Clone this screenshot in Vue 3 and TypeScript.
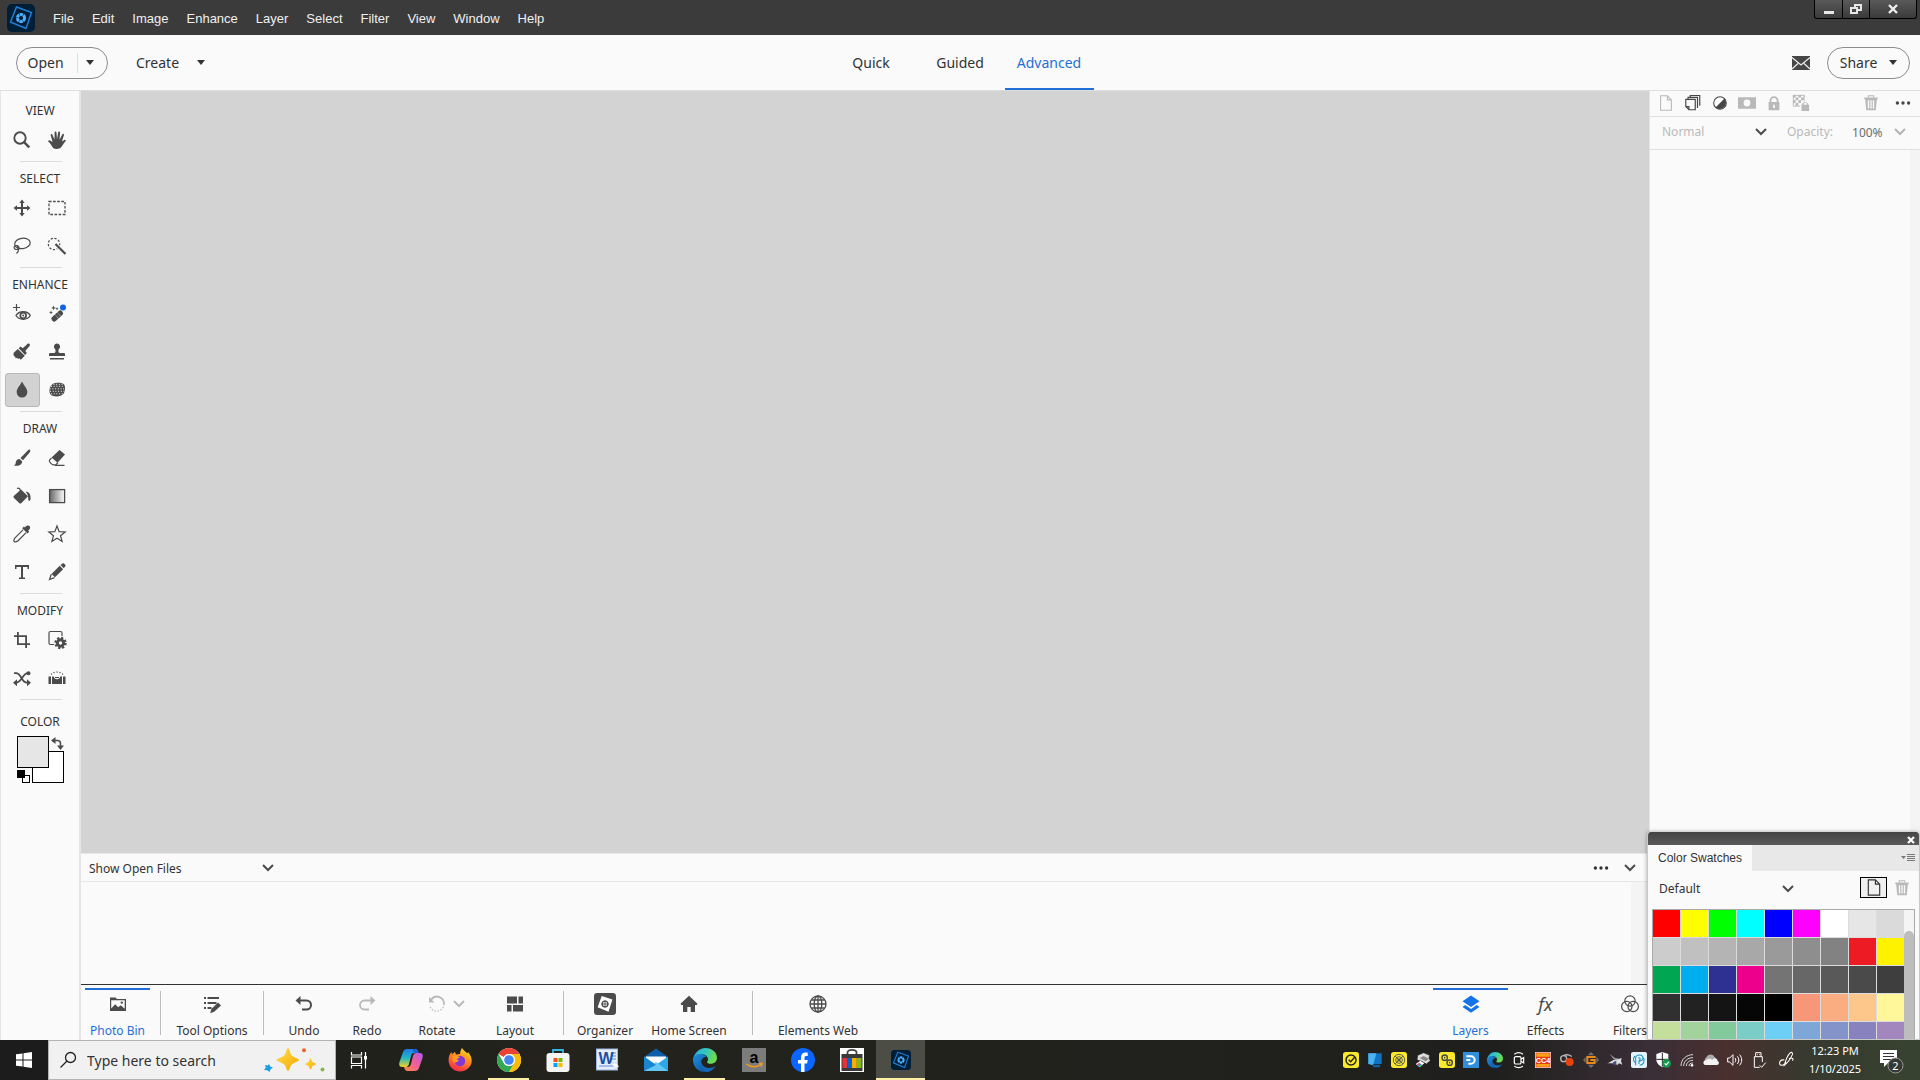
<script setup lang="ts">
import { ref } from 'vue'

interface Tool { icon: string; label: string }
interface ToolGroup { title: string; tools: Tool[] }
interface BarItem { icon: string; label: string; width: number; active?: boolean; dim?: boolean; dividerAfter?: number }
interface TaskApp { icon: string; label: string; state?: 'running' | 'active' }

const menus = ['File', 'Edit', 'Image', 'Enhance', 'Layer', 'Select', 'Filter', 'View', 'Window', 'Help']
const modes = ['Quick', 'Guided', 'Advanced']
const mode = ref('Advanced')
const activeTool = ref('Blur')

const groups: ToolGroup[] = [
  { title: 'VIEW', tools: [{ icon: 'zoom', label: 'Zoom' }, { icon: 'hand', label: 'Hand' }] },
  {
    title: 'SELECT',
    tools: [
      { icon: 'move', label: 'Move' }, { icon: 'marquee', label: 'Marquee' },
      { icon: 'lasso', label: 'Lasso' }, { icon: 'quick', label: 'Quick Selection' },
    ],
  },
  {
    title: 'ENHANCE',
    tools: [
      { icon: 'eye', label: 'Red Eye' }, { icon: 'heal', label: 'Spot Healing' },
      { icon: 'smart', label: 'Smart Brush' }, { icon: 'stamp', label: 'Clone Stamp' },
      { icon: 'drop', label: 'Blur' }, { icon: 'sponge', label: 'Sponge' },
    ],
  },
  {
    title: 'DRAW',
    tools: [
      { icon: 'brush', label: 'Brush' }, { icon: 'eraser', label: 'Eraser' },
      { icon: 'bucket', label: 'Paint Bucket' }, { icon: 'gradient', label: 'Gradient' },
      { icon: 'dropper', label: 'Color Picker' }, { icon: 'star', label: 'Custom Shape' },
      { icon: 'type', label: 'Type' }, { icon: 'pencil', label: 'Pencil' },
    ],
  },
  {
    title: 'MODIFY',
    tools: [
      { icon: 'crop', label: 'Crop' }, { icon: 'recompose', label: 'Recompose' },
      { icon: 'content', label: 'Content-Aware Move' }, { icon: 'straighten', label: 'Straighten' },
    ],
  },
]

const leftBar: BarItem[] = [
  { icon: 'photobin', label: 'Photo Bin', width: 65, active: true, dividerAfter: 10 },
  { icon: 'options', label: 'Tool Options', width: 102, dividerAfter: 0 },
  { icon: 'undo', label: 'Undo', width: 80 },
  { icon: 'redo', label: 'Redo', width: 46, dim: true },
  { icon: 'rotate', label: 'Rotate', width: 94, dim: true },
  { icon: 'layout', label: 'Layout', width: 62, dividerAfter: 17 },
  { icon: 'organizer', label: 'Organizer', width: 82 },
  { icon: 'home', label: 'Home Screen', width: 86, dividerAfter: 20 },
  { icon: 'web', label: 'Elements Web', width: 130 },
]
const rightBar: BarItem[] = [
  { icon: 'layers', label: 'Layers', width: 75, active: true },
  { icon: 'fx', label: 'Effects', width: 75 },
  { icon: 'filters', label: 'Filters', width: 94 },
]

const layerTools: Tool[] = [
  { icon: 'page', label: 'New layer' },
  { icon: 'group', label: 'New group' },
  { icon: 'adjust', label: 'Adjustment layer' },
  { icon: 'mask', label: 'Layer mask' },
  { icon: 'lock', label: 'Lock all' },
  { icon: 'lockalpha', label: 'Lock transparency' },
]

const swatches = (
  'ff0000 ffff00 00ff00 00ffff 0000ff ff00ff ffffff e6e6e6 dadada ' +
  'cccccc c0c0c0 b4b4b4 a8a8a8 9a9a9a 8e8e8e 828282 ed1c24 fff200 ' +
  '00a651 00aeef 2e3192 ec008c 747474 676767 595959 4a4a4a 3e3e3e ' +
  '303030 222222 141414 060606 000000 f7977a f9ad81 fdc68a fff799 ' +
  'c4df9b a2d39c 82ca9c 7bcdc8 6ecff6 7ea7d8 8493ca 8882be a187be'
).split(' ')

const apps: TaskApp[] = [
  { icon: 'copilot', label: 'Copilot' },
  { icon: 'firefox', label: 'Firefox' },
  { icon: 'chrome', label: 'Chrome', state: 'running' },
  { icon: 'store', label: 'Microsoft Store' },
  { icon: 'word', label: 'Word' },
  { icon: 'mail', label: 'Mail' },
  { icon: 'edge', label: 'Edge', state: 'running' },
  { icon: 'amazon', label: 'Amazon' },
  { icon: 'facebook', label: 'Facebook' },
  { icon: 'bag', label: 'Shopping' },
  { icon: 'elements', label: 'Elements', state: 'active' },
]
const tray = ['tCheck', 'tMonitor', 'tTarget', 'tPrinter', 'tGears', 'tD', 'edge', 'tCam', 'tCC', 'tRec', 'tG', 'tBird', 'tP', 'tShield', 'tWifi', 'tCloud', 'tSound', 'tUsb', 'tPen']

const edgeArt =
  '<defs><linearGradient id="eg1" x1="0" y1="0" x2="1" y2=".3"><stop offset="0" stop-color="#2aa8e8"/><stop offset=".55" stop-color="#35c6c0"/><stop offset="1" stop-color="#6ddc4a"/></linearGradient><linearGradient id="eg2" x1="0" y1="0" x2="1" y2="1"><stop offset="0" stop-color="#1e8fdc"/><stop offset="1" stop-color="#0c4f9c"/></linearGradient></defs>' +
  '<path fill="url(#eg1)" d="M0 12C1 5 6 0 12.500 0 19 0 24 4.500 24 9.800c0 3.800-2.800 6-6.200 6-2.400 0-3.800-.8-3.800-1.600 0-.7 1-1.200 1-3C15 8.300 12.400 6.500 9.500 6.500 5 6.500 1.500 9 0 12z"/>' +
  '<path fill="url(#eg2)" d="M0 12c0-3 3-6 7-6 3.500 0 6 1.500 7 3.200C11 8.500 8 11 8 15c0 4.800 3.600 8.300 7.500 8.700C7 25.500 0 20 0 12z"/>' +
  '<path fill="#1668b8" d="M8.500 13.500c0 4 3.600 6.500 7.700 6.500 2.600 0 4.800-.8 6.400-2-1.700 3.400-4.600 5.600-8 5.900C9.500 23 6.500 18 8.500 13.500z"/>'

const elementsArt =
  '<rect width="28" height="28" rx="5" fill="#001e36"/><path fill="none" stroke="#1f7fd6" stroke-width="1.500" d="M9.500 3 24.500 8.500 19 24.500 3.500 18z"/><circle cx="14" cy="14" r="3.600" fill="none" stroke="#4db1ff" stroke-width="3" stroke-dasharray="3.300 .5"/>'

const shapes: Record<string, string> = {
  zoom: '<circle cx="8" cy="8" r="5.700" fill="none" stroke="currentColor" stroke-width="1.900"/><path d="m12.300 12.300 5 5" stroke="currentColor" stroke-width="2.400"/>',
  hand: '<path fill="currentColor" d="M6.300 18.300C5 16.500 3.500 13.500 1.200 11.600c-.6-.8.7-1.800 1.800-1.200l2.600 1.700L3.700 5.200c-.3-1.200 1.400-1.700 1.800-.5l2 5L7.600 2.500c0-1.300 1.800-1.300 1.900 0l.5 6.800 1.200-7c.2-1.200 2-1 1.900.3l-.6 7.200 2.700-5.400c.6-1.100 2.100-.4 1.700.8l-2 6.200 2.400-1.500c1-.5 1.900.5 1.200 1.300-2.500 2.800-3.400 5.500-5.500 7.100-2 1-5 1-6.700 0z"/>',
  move: '<path fill="currentColor" d="M9 4h2v5h5v2h-5v5H9v-5H4V9h5zM10 1.500 12.700 5H7.300zM10 18.500 7.300 15h5.400zM1.500 10 5 7.300v5.400zM18.500 10 15 12.700V7.300z"/>',
  marquee: '<rect x="2" y="3.500" width="16" height="13" fill="none" stroke="currentColor" stroke-width="1.300" stroke-dasharray="2.600 1.500"/>',
  lasso: '<g fill="none" stroke="currentColor" stroke-width="1.200"><ellipse cx="10.500" cy="7.500" rx="7.800" ry="5.200" transform="rotate(-8 10 8)"/><ellipse cx="4.500" cy="11.500" rx="2.400" ry="2"/><path d="M5 9.500c2 2 2.500 5.500-.5 8"/></g>',
  quick: '<circle cx="7" cy="8" r="5.700" fill="none" stroke="currentColor" stroke-width="1.200" stroke-dasharray="2.200 1.600"/><path d="m8.500 8 10 10" stroke="#fafafa" stroke-width="4"/><path d="m8.500 8 10 10" stroke="currentColor" stroke-width="2.200"/>',
  eye: '<path d="M4.500 0v7M1 3.500h7" stroke="currentColor" stroke-width="1.200"/><path fill="none" stroke="currentColor" stroke-width="1.300" d="M4 11.500C7 6.500 15.500 6.500 18.300 11.500 15.500 16.500 7 16.500 4 11.500z"/><circle cx="11.200" cy="11.500" r="2.900" fill="none" stroke="currentColor" stroke-width="1.700"/><circle cx="11.200" cy="11.500" r="1" fill="currentColor"/>',
  heal: '<g fill="currentColor"><rect x="3.500" y="9.300" width="13.500" height="5.400" rx="2.300" transform="rotate(-42 10.200 12)"/><path d="m6.500 1.500.7 1.700 1.700.7-1.700.7-.7 1.700-.7-1.700-1.700-.7 1.700-.7zM4 6.500l.6 1.400 1.400.6-1.400.6-.6 1.400-.6-1.400L2 8.500l1.400-.6zM10 3l.5 1.200 1.200.5-1.200.5L10 6.400l-.5-1.200-1.200-.5 1.200-.5z"/></g><path d="m8 10.500 3.800 4.200M10.200 8.500l3.800 4.200" stroke="#fafafa" stroke-width=".8" stroke-dasharray="1 .8"/><circle cx="16" cy="3.500" r="3" fill="#0d66e5"/>',
  smart: '<path fill="currentColor" d="m1.500 11 4.300-4 7 6.800-4 4-1.600-1.600-1 .8-1.200-1.300-1.200.8-.8-1.900-1.300-.6zM6.700 6.200l2-1.700 2 1.800 4.700-4.400c1.600-1.300 3.300.5 2.200 2L13.300 9l1.500 2-1.600 1.900z"/>',
  stamp: '<path fill="currentColor" d="M10 1.500a3.200 3.200 0 0 1 2 5.600c-1 1-.8 3.200.5 4H17a1 1 0 0 1 1 1v2H2v-2a1 1 0 0 1 1-1h4.500c1.300-.8 1.500-3 .5-4A3.200 3.200 0 0 1 10 1.500zM3 16h14v1.500H3z"/>',
  drop: '<path fill="currentColor" d="M10 1.500c1.600 3.800 5.300 6.400 5.300 10.500A5.300 5.300 0 0 1 10 17.500 5.300 5.300 0 0 1 4.700 12C4.700 7.900 8.400 5.300 10 1.500z"/>',
  sponge: '<path fill="currentColor" d="M6 3.800C9 2.300 15.500 2.300 17.300 4.800c1.200 2.300 1 7-.8 9C14 16.800 7 17.200 4 15 1.800 13.300 1.500 6.500 6 3.800z"/><g fill="none" stroke="#f4f4f4" stroke-width="1" stroke-dasharray="1 1.700"><path d="M4 6.300h13M2.700 8.800h15M3 11.300h14.500M4 13.800h12M6.500 4.300h9"/></g>',
  brush: '<path fill="currentColor" d="M17.800 1.800c.9.600.4 1.900-.2 2.700L11 12.300 8.500 10 15.800 2.500c.6-.6 1.400-1.200 2-.7zM7.500 10.900l2.600 2.400c.3 3.200-3 5.200-8.300 4.200 2.200-.8 1.600-2 2.200-4 .5-1.700 1.900-2.700 3.500-2.600z"/>',
  eraser: '<path fill="currentColor" d="m12.500 2 5.500 4.500-7.500 8.300L4.500 9.500z"/><path fill="none" stroke="currentColor" stroke-width="1.200" d="m4.500 9.800-2 2.300c-1 1.400 2.600 4.900 4.400 4.700h2l2-2.300M8 17.400h9.500"/>',
  bucket: '<path fill="currentColor" d="m2 9.800 7-6.300 7 6.800-6.500 6.700c-.8.700-1.500.7-2.300 0l-5.200-5c-.8-.8-.7-1.500 0-2.200zM13.500 5.500c3 .3 5 2 5 5.500 0 1.600.3 3-1 4-1.400-.6-1.300-2-1.300-3.300 0-2-.6-3.600-2.700-6.200z"/><path fill="none" stroke="currentColor" stroke-width="1.300" d="M5 2.500c2-1 3 .5 3.500 2L10 9"/>',
  gradient: '<defs><linearGradient id="gr"><stop offset="0" stop-color="#666"/><stop offset="1" stop-color="#fff"/></linearGradient></defs><rect x="2.600" y="3.600" width="15" height="13" fill="url(#gr)" stroke="#4b4b4b" stroke-width="1.300"/>',
  dropper: '<path fill="currentColor" d="M13 3.500c1.300-2 3.300-2.500 4.500-1.400 1.200 1.200.7 3.200-1.300 4.500l1 1.200-1.700 1.700-5.300-5.300 1.700-1.700z"/><path fill="none" stroke="currentColor" stroke-width="1.200" d="m11 5.800-8 8c-.7.800-.5 1.500-1.200 2.500-.4.800 1 2 1.800 1.600 1-.7 1.700-.5 2.500-1.200l8-8"/>',
  star: '<path fill="none" stroke="currentColor" stroke-width="1.200" d="m10 2 2.200 5.600 6 .3-4.700 3.800 1.600 5.800-5.100-3.300-5.100 3.300 1.600-5.800L1.800 7.900l6-.3z"/>',
  type: '<path fill="currentColor" d="M3 3h14v4h-1.500V5H11v10.500h2V17H7v-1.500h2V5H4.500v2H3z"/>',
  pencil: '<path fill="currentColor" d="m13.500 3 2-1.500c.5-.3 1-.3 1.500.1l1.200 1.200c.5.500.5 1 .1 1.500L16.800 6.300zM12.700 3.800l3.400 3.400L8 15.300l-3.500-3.400z"/><path fill="none" stroke="currentColor" stroke-width="1.200" d="m4.300 12.300-1.800 5.200 5-1.900"/>',
  crop: '<path fill="currentColor" d="M5 2h1.800v3.200H15v8h3V15h-3v3h-1.800v-3H5V7H2V5.200h3zm1.800 5v6.200h6.400V7z"/>',
  recompose: '<path fill="none" stroke="currentColor" stroke-width="1.200" d="M7 14.500H3.500a1.500 1.500 0 0 1-1.500-1.500V3A1.500 1.500 0 0 1 3.500 1.500h10A1.500 1.500 0 0 1 15 3v3"/><circle cx="13.500" cy="13" r="3.200" fill="none" stroke="currentColor" stroke-width="3"/><circle cx="13.500" cy="13" r="5.200" fill="none" stroke="currentColor" stroke-width="2" stroke-dasharray="2.200 1.880"/>',
  content: '<path fill="none" stroke="currentColor" stroke-width="1.800" d="M2 5.200h2c5.500 0 5.500 9.500 11 9.500h.5M16 5.200c-5.500 0-6.500 9.500-12 9.500"/><path fill="currentColor" d="m1 14.700 4-3.500v7zM19 14.700l-4-3.500v7zM18.500 5.200a2 2 0 1 1-4 0 2 2 0 0 1 4 0z"/>',
  straighten: '<path fill="currentColor" d="M1.500 8.500H4V16H1.500zM16 8.500h2.500V16H16zM5 8.500h1.800c.3 2 1.500 2.700 3.200 2.700s2.900-.7 3.200-2.700H15V16H5zM8 9h4v1H8z"/><g fill="currentColor"><circle cx="4.500" cy="6" r=".7"/><circle cx="7" cy="4.500" r=".7"/><circle cx="10" cy="4" r=".7"/><circle cx="13" cy="4.500" r=".7"/><circle cx="15.500" cy="6" r=".7"/></g>',
  photobin: '<path fill="currentColor" d="M2 3.500h5.500l1.500 1.500H18v12H2zM3.200 7v7.500l4-4.200 3 3 2.500-2 4 3.500V6.300H3.200z" fill-rule="evenodd"/><circle cx="13.800" cy="8.600" r="1.200" fill="currentColor"/>',
  options: '<path stroke="currentColor" stroke-width="1.800" d="M2 4h2M5.500 4H17M2 9h2M5.500 9h9M2 14h2M5.500 14h4"/><path fill="currentColor" d="m16 8.500 3 3-6.800 6.300-4 1.400 1.200-4.200z"/>',
  undo: '<path fill="none" stroke="currentColor" stroke-width="2" d="M4 6.500h8.500a4.500 4.500 0 0 1 0 9H8"/><path fill="currentColor" d="M6.500 2v9L1.500 6.500z"/>',
  redo: '<path fill="none" stroke="currentColor" stroke-width="1.800" d="M16 6.500H7.500a4.500 4.500 0 0 0 0 9H12"/><path fill="currentColor" d="M13.500 2v9l5-4.500z"/>',
  rotate: '<path fill="none" stroke="currentColor" stroke-width="1.800" d="M4 6C8-.5 17 3 17 10"/><path fill="none" stroke="currentColor" stroke-width="1.200" stroke-dasharray="1.500 1.500" d="M17 10c0 8-12 10-14 2"/><path fill="currentColor" d="M2 3v5.500h5.500z"/>',
  layout: '<path fill="currentColor" d="M2 2.500h10v7H2zM13.500 2.500H18v7h-4.500zM2 11h4.500v6.500H2zM8 11h10v6.500H8z"/>',
  organizer: '<rect width="20" height="20" rx="3" fill="currentColor"/><path fill="#fff" d="m7 2.700 9.800 3.300-3.600 11L3.300 13z"/><circle cx="10" cy="10" r="2.600" fill="none" stroke="currentColor" stroke-width="1.200"/><path d="M10 6.500v7M6.500 10h7" stroke="currentColor" stroke-width=".8"/>',
  home: '<path fill="currentColor" d="m10 1.800 8.500 8-.8 1.200H16v7h-4.300v-5H8.300v5H4v-7H2.300l-.8-1.200z"/>',
  web: '<g fill="none" stroke="currentColor" stroke-width="1.300"><circle cx="10" cy="10" r="8"/><ellipse cx="10" cy="10" rx="3.800" ry="8"/><path d="M10 2v16M2 10h16M3.300 6h13.400M3.300 14h13.400"/></g>',
  layers: '<path fill="currentColor" d="m10 1.500 8.500 5.800L10 13 1.500 7.300zM4.300 11 10 15l5.700-4 2.800 1.900L10 18.700l-8.500-5.800z"/>',
  filters: '<g fill="none" stroke="currentColor" stroke-width="1.200"><circle cx="10" cy="7" r="5.200"/><circle cx="6.800" cy="12.500" r="5.200"/><circle cx="13.200" cy="12.500" r="5.200"/></g>',
  page: '<path fill="none" stroke="currentColor" stroke-width="1.200" d="M4 2h7.500L16 6.500V18H4zM11.500 2v4.500H16"/>',
  group: '<path fill="none" stroke="currentColor" stroke-width="1.300" d="M2 6h10.500v11.500H5.500L2 14zM2 14h3.500v3.500M4.500 6V3.700h10.500V15.500M7 3.500V1.700h10.500V13"/>',
  adjust: '<circle cx="10" cy="10" r="7" fill="#fff" stroke="currentColor" stroke-width="1.200"/><path fill="currentColor" d="M15 5a7.100 7.100 0 0 1-10 10z"/>',
  mask: '<path fill="currentColor" fill-rule="evenodd" d="M0 3.500h20v13H0zM10 6.200a3.800 3.800 0 1 0 0 7.600 3.800 3.800 0 0 0 0-7.600z"/>',
  lock: '<path fill="currentColor" fill-rule="evenodd" d="M4 9h1V7.500a5 5 0 0 1 10 0V9h1v9H4zm3 0h6V7.500a3 3 0 0 0-6 0zm2 3v3.500h2V12z"/>',
  lockalpha: '<path fill="currentColor" d="M1 1h3v3H1zM7 1h3v3H7zM4 4h3v3H4zM10 4h3v3h-3zM1 7h3v3H1zM7 7h3v3H7zM4 10h3v3H4zM13 1h1v3h-1z"/><path fill="none" stroke="currentColor" d="M1.500 1.500h12V8M1.500 1.500v12H9"/><path fill="currentColor" fill-rule="evenodd" d="M11 12v-1a4 4 0 0 1 7 0v1h1v7h-8.500v-7zm2 0h3.500v-1c0-1.800-3.500-1.800-3.500 0z"/>',
  trash: '<path fill="none" stroke="currentColor" stroke-width="1.200" d="M7 4V2h6v2"/><path fill="currentColor" fill-rule="evenodd" d="M2.500 4h15v1.800h-1L15.300 18H4.700L3.500 5.800h-1zM6.500 7v9H8V7zM9.300 7v9h1.400V7zM12 7v9h1.500V7z"/>',
  dots: '<g fill="currentColor"><circle cx="3" cy="10" r="2.100"/><circle cx="10" cy="10" r="2.100"/><circle cx="17" cy="10" r="2.100"/></g>',
  envelope: '<path fill="#464646" d="M0 2h18v14H0z"/><path fill="none" stroke="#eee" stroke-width="1.200" d="m0 3.500 9 7.500 9-7.500M0 15l6-5.500M18 15l-6-5.500"/>',
  swap: '<path fill="none" stroke="currentColor" stroke-width="1.500" d="M4 3.500h2.500c2 0 3 1.200 3 3V9"/><path fill="currentColor" d="M0 3.500 4.500 0v7zM9.500 13 6 8.500h7z"/>',
  windows: '<path fill="#fff" d="M0 2.300 6.500 1.400v6.100H0zM7.500 1.200 16 0v7.500H7.500zM0 8.500h6.500v6.100L0 13.700zM7.500 8.500H16V16l-8.500-1.200z"/>',
  search: '<circle cx="10.500" cy="5.500" r="5" fill="none" stroke="#222" stroke-width="1.300"/><path d="M7 9 .5 15.500" stroke="#222" stroke-width="1.300"/>',
  sparkle: '<defs><linearGradient id="sp" x1="0" y1="0" x2="1" y2="1"><stop offset="0" stop-color="#ffe04a"/><stop offset="1" stop-color="#f5a800"/></linearGradient></defs><path fill="url(#sp)" d="M24 0c1.500 0 2 5.500 3.800 7.500C29.800 9.500 35 10.500 35 12s-5.200 2.500-7.200 4.500S25.500 23 24 23s-1.800-4.500-3.800-6.500S12.500 13.500 12.500 12s5.700-2.500 7.700-4.500S22.500 0 24 0z"/><path fill="url(#sp)" d="M46.500 10c.8 0 1 3 2 4s3.500 1.200 3.500 2-2.500 1-3.500 2-1.200 3.500-2 3.500-1-2.500-2-3.500-3.500-1.200-3.500-2 2.500-1 3.500-2 1.200-4 2-4z"/><path fill="#1c9fe0" d="m5 16 1.500 2.700 2.500.8-2.400 1.700L5.500 24l-2.300-1.800L0 22l1.800-2.500L1 17l2.800.5z"/><circle cx="40" cy="2.200" r="2" fill="#e8642c"/><circle cx="58.500" cy="21.500" r="2" fill="#7dbb4c"/>',
  taskview: '<path fill="none" stroke="#fff" stroke-width="1.200" d="M1.500 0v3h10V0M1.500 5h10v6.500h-10zM1.500 16.500v-3h10v3M15.500 0v16.500"/><path fill="#fff" d="M14 4h3v3.500h-3z"/>',
  copilot: '<defs><linearGradient id="cp1" x1="0" y1="0" x2="0" y2="1"><stop offset="0" stop-color="#1f7be8"/><stop offset=".5" stop-color="#22b7c4"/><stop offset="1" stop-color="#f2d21e"/></linearGradient><linearGradient id="cp2" x1="1" y1="0" x2="0" y2="1"><stop offset="0" stop-color="#b25bea"/><stop offset=".5" stop-color="#ef5f9a"/><stop offset="1" stop-color="#ff8a3c"/></linearGradient></defs><path fill="url(#cp1)" d="M8 1h8c2 0 3 2 3.500 4L15 5c-2 0-2.500 1-3 3l-2 8c-.5 2-1.500 3-3.500 3H3c-3 0-3-3-2.500-5L4 4c.7-2 2-3 4-3z"/><path fill="url(#cp2)" d="M16 23H8.500c-2 0-3-2-3.500-4h3.500c2 0 3-1 3.500-3l2-8c.5-2 1.500-3 3.500-3H21c3 0 3.200 3 2.500 5L20 20c-.7 2-2 3-4 3z"/><path fill="#1d5fd6" d="M13 1h4c1.500.5 2 2 2.500 4h-3c-1.500 0-2-2-3.500-4z"/>',
  firefox: '<defs><linearGradient id="ff" x1=".8" y1="0" x2=".3" y2="1"><stop offset="0" stop-color="#ffe226"/><stop offset=".45" stop-color="#ff8a1e"/><stop offset="1" stop-color="#f5264f"/></linearGradient></defs><path fill="url(#ff)" d="M14 0c1 2 4 4 5.500 5.500L20 4c2.500 3 4 6 3.700 9.500C23.300 19 18 23.500 12 23.500S1 19 .6 13C.3 9 1.500 6 3.500 4l.5 2.500C5 5 6 4.500 7 4l1 2.500L12 6c0-2 1-4.500 2-6z"/><circle cx="12" cy="13" r="5.200" fill="#8437d6"/><path fill="#ff9a24" d="M5 8c3-1 5 0 7 1.500-1 .5-3 .5-3.500 2 1 0 2.500.5 2 1.500-1 1.500-3.500 1-4.500 2C4 13 4 10 5 8z"/>',
  chrome: '<circle cx="12" cy="12" r="12" fill="#fff"/><path fill="#ea4335" d="M1.600 6A12 12 0 0 1 22.400 6H12a6 6 0 0 0-5.200 3z"/><path fill="#fbbc05" d="M22.400 6A12 12 0 0 1 12 24l5.200-9A6 6 0 0 0 12 6z"/><path fill="#34a853" d="M12 24A12 12 0 0 1 1.600 6l5.200 9a6 6 0 0 0 10.400 0z"/><circle cx="12" cy="12" r="6" fill="#fff"/><circle cx="12" cy="12" r="4.800" fill="#4285f4"/>',
  store: '<path fill="none" stroke="#35b5e6" stroke-width="1.800" d="M7 6V2h10v4"/><rect x=".5" y="5" width="23" height="19" rx="3" fill="#f4f4f4"/><path fill="#f25022" d="M7.500 10h4v4h-4z"/><path fill="#7fba00" d="M12.500 10h4v4h-4z"/><path fill="#00a4ef" d="M7.500 15h4v4h-4z"/><path fill="#ffb900" d="M12.500 15h4v4h-4z"/>',
  word: '<rect x="1.500" y="1" width="21" height="21" fill="#e6eefa" stroke="#9db8e0"/><path stroke="#5b8fd6" d="M16 5h5M16 8h5M16 11h5M4 18h14"/><text x="11" y="15.500" text-anchor="middle" font-family="Liberation Sans, Arial, sans-serif" font-weight="700" font-size="16" fill="#1b4fa3">W</text><path fill="#fff" stroke="#9db8e0" stroke-width=".6" d="M15 15h7l1.500 4-3 1z"/>',
  mail: '<path fill="#0c5ea8" d="m0 9 12-8.500L24 9v3H0z"/><path fill="#f7fbff" d="M2 8.500h20V16H2z"/><path fill="#2ea6e6" d="M0 8.500 12 17l12-8.500V23H0z"/><path fill="#63c8f5" d="M0 23 12 14l12 9z"/><path fill="#1b86d0" d="M0 8.500 12 17 0 23z"/>',
  edge: edgeArt,
  amazon: '<path fill="#7c7c7c" d="M0 0h24v24H0z"/><text x="12" y="15" text-anchor="middle" font-family="Liberation Sans, Arial, sans-serif" font-weight="700" font-size="16" fill="#000">a</text><path fill="none" stroke="#f79a1c" stroke-width="1.500" d="M4.500 16c4 3.500 10.500 3.500 14.500.5M17 15.500l3 0-1 3"/>',
  facebook: '<circle cx="12" cy="12" r="12" fill="#0b66ff"/><path fill="#fff" d="M10 24v-8.500H7V12h3V9.500C10 6.300 11.800 4.500 14.700 4.500c1 0 2 .2 2 .2v3.200h-1.500c-1.500 0-1.700.8-1.700 1.800V12h3.200l-.6 3.500h-2.600V24z"/>',
  bag: '<path fill="#fff" d="M0 0h24v24H0z"/><path fill="none" stroke="#444" stroke-width="1.800" d="M7.500 8V4.500c0-3.500 9-3.500 9 0V8"/><path fill="#3a3a3a" d="M1.500 6h21v17h-21z"/><path fill="#e53238" d="M2.500 10h4.800v10H2.500z"/><path fill="#0064d2" d="M7.300 10H12v10H7.300z"/><path fill="#f5af02" d="M12 10h4.800v10H12z"/><path fill="#86b817" d="M16.800 10h4.700v10h-4.700z"/>',
  elements: elementsArt,
  tCheck: '<rect width="24" height="24" rx="4" fill="#fbe92b"/><circle cx="12" cy="12" r="7.500" fill="none" stroke="#222" stroke-width="2.200"/><path fill="none" stroke="#222" stroke-width="2.200" d="m8.500 11.500 3 3 6-6.500"/>',
  tMonitor: '<path fill="#1272c4" d="M2 2h20v16H2z"/><path fill="#4bb3f0" d="m2 2 12 0L9 20 2 18z"/><path fill="#0d5fa8" d="m8 19 12 0-1 4h-9z"/>',
  tTarget: '<rect width="24" height="24" rx="4" fill="#fbe92b"/><g fill="none" stroke="#555" stroke-width="1.400"><circle cx="12" cy="12" r="8.500"/><circle cx="12" cy="12" r="5"/><circle cx="12" cy="12" r="1.800"/><path d="m6 6 12 12M18 6 6 18"/></g>',
  tPrinter: '<path fill="#ddd" stroke="#222" d="m4 5 9-4 9 4-1 4 2 4-6 5-7-4-7-2z"/><path fill="#888" d="m7 9 9 5 5-4-8-4z"/><path fill="#fff" d="m1 18 7-5 6 4-7 6z"/><path stroke="#e33" stroke-width="2" d="m3 20 4-3"/><path stroke="#2a6be0" stroke-width="2" d="m5 21 4-3"/><path stroke="#2ab040" stroke-width="2" d="m7 22 4-3"/>',
  tGears: '<rect width="24" height="24" rx="4" fill="#fbe92b"/><g fill="none" stroke="#444" stroke-width="2"><circle cx="8.500" cy="8.500" r="4"/><circle cx="16" cy="16" r="4"/></g><circle cx="8.500" cy="8.500" r="1.200" fill="#444"/><circle cx="16" cy="16" r="1.200" fill="#444"/>',
  tD: '<path fill="#2f8fdd" d="M0 0h24v24H0z"/><path fill="none" stroke="#fff" stroke-width="3" d="M5 6.500h7a5.500 5.500 0 0 1 0 11H8M5 12h6"/>',
  tCam: '<g fill="none" stroke="#fff" stroke-width="1.800"><rect x="5" y="7" width="10" height="11" rx="2"/><path d="m15 11 4-2.500v8L15 14M5 3.500c4-3 9-3 13 0M5 21.500c4 2.500 9 2.500 13 0"/></g>',
  tCC: '<path fill="#e23a12" d="M0 0h24v24H0z"/><path fill="#f7a11a" d="M2 2h20v5H2zM2 18h20v4H2z"/><text x="12" y="17" text-anchor="middle" font-family="Liberation Sans, Arial, sans-serif" font-weight="700" font-size="11" fill="#fff">CC4</text><rect x=".5" y=".5" width="23" height="23" fill="none" stroke="#fde"/>',
  tRec: '<g fill="none" stroke="#bbb" stroke-width="2"><circle cx="7" cy="10" r="4.500"/><path d="M7 5.500C11 3 17 4 19 7"/></g><circle cx="16" cy="15" r="6" fill="#e8430f"/>',
  tG: '<path fill="#6d6d6d" d="m12 0 5 5H7zM12 24l-5-5h10zM0 12l4-5v10zM24 12l-4 5V7z"/><path fill="none" stroke="#e8891c" stroke-width="3" d="M19 7.500H6.500v9h11V12H11"/>',
  tBird: '<path fill="#999" d="m4 3 8 6 7 1-3 3-6-2z"/><path fill="#ddd" d="M0 17c5-1 7-5 11-5l6-1 5-2-1 5 2 5-5-2-3 3-2-3z"/><path fill="#44508c" d="m9 15 5-2v6l-4 1z"/>',
  tP: '<rect width="24" height="24" rx="3" fill="#e4f3fa"/><g fill="none" stroke="#2090c4" stroke-width="1.600"><path d="M7 20V9c0-6 11-6 11 0 0 4-4 5-6 4M6 6c-3 3-3 7 0 10M13 20c6-1 8-6 6-11M11 9c3-1 4 2 1 4v5"/></g>',
  tShield: '<path fill="#fff" d="m11 0 9 3v8c0 6-4 9-9 12-5-3-9-6-9-12V3z"/><path stroke="#222" stroke-width="1.500" d="M11 1v21M2 11h18"/><circle cx="17.500" cy="17" r="6.500" fill="#149a4a"/><path fill="none" stroke="#fff" stroke-width="1.800" d="m14.500 17 2.300 2.300 4-4.500"/>',
  tWifi: '<g fill="none" stroke="#ddd" stroke-width="1.500"><path d="M3 21C3 11 11 4 21 4M7 21C7 14 13 8.500 21 8.500M11 21c0-5 4.500-8.500 10-8.500M15 21c0-3 2-4.500 6-4.500"/></g><circle cx="19.500" cy="20" r="2" fill="#fff"/>',
  tCloud: '<path fill="#aaa" d="M6 17A5 5 0 0 1 5 8c2-5 9-6 12-1l2 2-9 9z"/><path fill="#f2f2f2" d="M3 19.500c-4-2-2.500-7.500 1.500-7.200C8 9 12 10 14 12c2-4.500 8-3 8 1.500 3 1.500 2 6-1 6z"/>',
  tSound: '<g fill="none" stroke="#fff" stroke-width="1.500"><path d="M1 9h3l5-5v16l-5-5H1zM12 9c1.500 2 1.500 4.500 0 6.500M15.500 6.500c3 3.500 3 8 0 11.500M19 4c4 5 4 11 0 16"/></g>',
  tUsb: '<g fill="none" stroke="#fff" stroke-width="1.500"><path d="M7 7V1h8v6M9.500 4h1M12 4h1M5 7h12v8M5 7v16h8M13 20l3 3 6-7"/></g>',
  tPen: '<g fill="none" stroke="#fff" stroke-width="1.600"><path d="M8 20c2-8 6-16 9-19 2-1 4 0 3 3-2 5-7 12-12 16zM8 12c-5-1-8 2-7 6 2 4 8 1 10-2M15 10c4-2 8 0 5 3"/></g>',
  notice: '<path fill="#fff" d="M0 0h17v13H8l-4 4v-4H0z"/><path stroke="#333" stroke-width="1.200" d="M3 3.500h11M3 6.500h11M3 9.500h8"/><circle cx="15.500" cy="15.500" r="7.500" fill="#333a33" stroke="#999"/><text x="15.500" y="19.500" text-anchor="middle" font-family="Noto Sans, sans-serif" font-size="11" fill="#fff">2</text>',
}
</script>

<template>
  <div class="screen">
    <header class="menubar">
      <svg class="logo" viewBox="0 0 28 28" v-html="shapes.elements"></svg>
      <nav class="menus">
        <button v-for="m in menus" :key="m" type="button">{{ m }}</button>
      </nav>
      <div class="winbtns">
        <button type="button" aria-label="Minimize"><svg width="10" height="12" viewBox="0 0 10 12"><path fill="#e6e6e6" d="M0 8h10v3H0z" /></svg></button>
        <button type="button" aria-label="Restore"><svg width="12" height="12" viewBox="0 0 12 12"><path fill="none" stroke="#e6e6e6" stroke-width="2" d="M5 4V2h6v5H8M1 5h6v5H1z" /></svg></button>
        <button type="button" class="wide" aria-label="Close"><svg width="10" height="10" viewBox="0 0 10 10"><path stroke="#eee" stroke-width="2.400" d="m1 1 8 8M9 1 1 9" /></svg></button>
      </div>
    </header>

    <div class="topbar">
      <div class="top-left">
        <div class="pill">
          <button type="button" class="pill-main">Open</button>
          <button type="button" class="pill-arrow" aria-label="Open menu"><i class="tri"></i></button>
        </div>
        <button type="button" class="create">Create<i class="tri"></i></button>
      </div>
      <nav class="modes">
        <button v-for="m in modes" :key="m" type="button" :class="{ on: mode === m }" @click="mode = m">{{ m }}</button>
      </nav>
      <div class="top-right">
        <button type="button" aria-label="Messages"><svg width="18" height="18" viewBox="0 0 18 18" v-html="shapes.envelope"></svg></button>
        <button type="button" class="share">Share<i class="tri"></i></button>
      </div>
    </div>

    <div class="workspace">
      <aside class="toolbox">
        <section v-for="g in groups" :key="g.title">
          <h2>{{ g.title }}</h2>
          <div class="tools">
            <button v-for="t in g.tools" :key="t.label" type="button" :aria-label="t.label" :class="{ on: activeTool === t.label }" @click="activeTool = t.label">
              <svg width="20" height="20" viewBox="0 0 20 20" v-html="shapes[t.icon]"></svg>
            </button>
          </div>
        </section>
        <section class="color">
          <h2>COLOR</h2>
          <div class="chips">
            <span class="chip back"></span>
            <span class="chip fore"></span>
            <svg class="swap" viewBox="0 0 13 13" v-html="shapes.swap"></svg>
            <span class="mini back"></span>
            <span class="mini fore"></span>
          </div>
        </section>
      </aside>

      <div class="main">
        <div class="upper">
          <div class="center">
            <main class="canvas"></main>
            <div class="bin-head">
              <label class="picker files">
                <select aria-label="Photo bin source"><option>Show Open Files</option></select>
                <svg class="chev" viewBox="0 0 12 8"><path d="m1 1 5 5 5-5" /></svg>
              </label>
              <div class="bin-actions">
                <button type="button" aria-label="More"><svg width="16" height="16" viewBox="0 0 20 20" v-html="shapes.dots"></svg></button>
                <button type="button" aria-label="Collapse"><svg class="chev" viewBox="0 0 12 8"><path d="m1 1 5 5 5-5" /></svg></button>
              </div>
            </div>
            <div class="bin-body"></div>
          </div>
          <aside class="layers">
            <div class="layer-tools">
              <button v-for="t in layerTools" :key="t.icon" type="button" :aria-label="t.label" :class="{ live: t.icon === 'group' || t.icon === 'adjust' }">
                <svg width="18" height="18" viewBox="0 0 20 20" v-html="shapes[t.icon]"></svg>
              </button>
              <button type="button" class="push" aria-label="Delete layer"><svg width="18" height="18" viewBox="0 0 20 20" v-html="shapes.trash"></svg></button>
              <button type="button" class="live more" aria-label="More"><svg width="16" height="16" viewBox="0 0 20 20" v-html="shapes.dots"></svg></button>
            </div>
            <div class="blend">
              <label class="picker normal">
                <select aria-label="Blend mode"><option>Normal</option></select>
                <svg class="chev" viewBox="0 0 12 8"><path d="m1 1 5 5 5-5" /></svg>
              </label>
              <label class="opacity" for="opacity">Opacity:</label>
              <input id="opacity" value="100%" />
              <svg class="chev pale" viewBox="0 0 12 8"><path d="m1 1 5 5 5-5" /></svg>
            </div>
            <div class="layer-list"></div>
          </aside>
        </div>

        <footer class="bottombar">
          <template v-for="b in leftBar" :key="b.label">
            <button type="button" class="bar-item" :class="{ on: b.active }" :style="{ width: b.width + 'px' }">
              <span class="bar-icon" :class="{ dim: b.dim, boxed: b.icon === 'organizer' }">
                <svg viewBox="0 0 20 20" v-html="shapes[b.icon]"></svg>
                <svg v-if="b.icon === 'rotate'" class="chev" viewBox="0 0 12 8"><path d="m1 1 5 5 5-5" /></svg>
              </span>
              <span>{{ b.label }}</span>
            </button>
            <i v-if="b.dividerAfter !== undefined" class="divider" :style="{ marginLeft: b.dividerAfter + 'px' }"></i>
          </template>
          <div class="bar-right">
            <button v-for="b in rightBar" :key="b.label" type="button" class="bar-item" :class="{ on: b.active }" :style="{ width: b.width + 'px' }">
              <span class="bar-icon">
                <em v-if="b.icon === 'fx'" class="fx">fx</em>
                <svg v-else viewBox="0 0 20 20" v-html="shapes[b.icon]"></svg>
              </span>
              <span>{{ b.label }}</span>
            </button>
          </div>
        </footer>
      </div>

      <div class="swatch-window">
        <div class="sw-title">
          <button type="button" aria-label="Close"><svg width="8" height="8" viewBox="0 0 8 8"><path stroke="#fff" stroke-width="2.200" d="m1 1 6 6M7 1 1 7" /></svg></button>
        </div>
        <div class="sw-tabs">
          <button type="button" class="sw-tab">Color Swatches</button>
          <button type="button" class="sw-menu" aria-label="Panel menu">
            <svg width="14" height="8" viewBox="0 0 14 8"><path fill="#777" d="M0 2h5L2.500 5z" /><path stroke="#777" d="M6 .5h8M6 2.500h8M6 4.500h8M6 6.500h8" /></svg>
          </button>
        </div>
        <div class="sw-tools">
          <label class="picker default">
            <select aria-label="Swatch set"><option>Default</option></select>
            <svg class="chev" viewBox="0 0 12 8"><path d="m1 1 5 5 5-5" /></svg>
          </label>
          <button type="button" class="sw-new" aria-label="New swatch"><svg width="20" height="19" viewBox="0 0 20 20" v-html="shapes.page"></svg></button>
          <button type="button" class="sw-trash" aria-label="Delete swatch"><svg width="18" height="18" viewBox="0 0 20 20" v-html="shapes.trash"></svg></button>
        </div>
        <div class="sw-box">
          <div class="sw-grid">
            <span v-for="(c, i) in swatches" :key="i" :style="{ background: '#' + c }"></span>
          </div>
          <div class="sw-scroll"><i></i></div>
        </div>
      </div>
    </div>

    <div class="taskbar">
      <button type="button" class="start" aria-label="Start"><svg width="16" height="16" viewBox="0 0 16 16" v-html="shapes.windows"></svg></button>
      <div class="search">
        <svg width="16" height="16" viewBox="0 0 16 16" v-html="shapes.search"></svg>
        <input type="text" placeholder="Type here to search" aria-label="Search" />
        <svg width="61" height="25" viewBox="0 0 61 25" v-html="shapes.sparkle"></svg>
      </div>
      <button type="button" class="taskview" aria-label="Task view"><svg width="18" height="17" viewBox="0 0 18 17" v-html="shapes.taskview"></svg></button>
      <button v-for="a in apps" :key="a.label" type="button" class="app" :class="a.state" :aria-label="a.label">
        <svg :width="a.icon === 'elements' ? 20 : 24" :height="a.icon === 'elements' ? 20 : 24" :viewBox="a.icon === 'elements' ? '0 0 28 28' : '0 0 24 24'" v-html="shapes[a.icon]"></svg>
      </button>
      <div class="tray">
        <svg v-for="t in tray" :key="t" width="16" height="16" viewBox="0 0 24 24" v-html="shapes[t]"></svg>
        <div class="clock"><span>12:23 PM</span><span>1/10/2025</span></div>
        <button type="button" class="notice" aria-label="Notifications"><svg width="24" height="24" viewBox="0 0 24 24" v-html="shapes.notice"></svg></button>
      </div>
    </div>
  </div>
</template>

<style>
body { margin: 0; overflow: hidden; }
</style>

<style scoped>
* { box-sizing: border-box; }
.screen {
  display: flex;
  flex-direction: column;
  height: 100vh;
  font: 12px/18px "Noto Sans", sans-serif;
  color: #323232;
  background: #fafafa;
}
button, select, input { font: inherit; color: inherit; background: none; border: 0; padding: 0; margin: 0; outline: 0; }
button { display: flex; align-items: center; justify-content: center; }
svg { display: block; flex: none; overflow: visible; }
i { display: block; }
.tri { width: 0; height: 0; border: 4px solid transparent; border-top: 5px solid #323232; border-bottom: 0; }
.chev { width: 12px; height: 8px; fill: none; stroke: #4b4b4b; stroke-width: 2; }
.chev.pale { margin-left: auto; stroke: #b4b4b4; }

.menubar { display: flex; flex: none; height: 35px; background: #3b3b3b; }
.logo { width: 28px; height: 28px; margin: 4px 0 0 7px; }
.menus { display: flex; flex: 1; margin-left: 9px; padding-top: 2px; font: 13px/33px "Liberation Sans", Arial, sans-serif; color: #f0f0f0; }
.menus button { padding: 0 9px; }
.winbtns { display: flex; height: 19px; margin-right: 3px; border: 1px solid #000; border-top: 0; border-radius: 0 0 3px 3px; background: linear-gradient(#5a5a5a, #3a3a3a); }
.winbtns button { width: 27px; }
.winbtns button + button { border-left: 1px solid #000; }
.winbtns .wide { width: 47px; }

.topbar { display: grid; grid-template-columns: 1fr auto 1fr; flex: none; height: 56px; border-bottom: 1px solid #dedede; font-size: 14px; line-height: 20px; }
.top-left { display: flex; align-items: center; padding-left: 16px; }
.pill, .share { height: 32px; border: 1px solid #8c8c8c; border-radius: 16px; }
.pill { display: flex; width: 92px; align-items: center; }
.pill-main { width: 61px; height: 20px; padding-right: 14px; padding-left: 11px; border-right: 1px solid #dedede; }
.pill-arrow { width: 24px; height: 20px; }
.create { margin-left: 28px; gap: 18px; }
.modes { display: flex; }
.modes button { width: 89px; padding-top: 2px; border-bottom: 2px solid transparent; }
.modes .on { color: #1f6fd6; border-color: #1f6fd6; }
.top-right { display: flex; align-items: center; justify-content: flex-end; gap: 17px; padding-right: 10px; }
.share { width: 83px; gap: 12px; }

.workspace { position: relative; display: flex; flex: 1; min-height: 0; overflow: hidden; }
.toolbox { flex: none; width: 81px; padding-top: 3px; border: solid #e6e6e6; border-width: 0 2px 0 1px; color: #4b4b4b; }
.toolbox section { display: flow-root; }
.toolbox section:not(.color)::after { content: ""; display: block; width: 42px; height: 1px; margin: 4px 0 0 19px; background: #dcdcdc; }
h2 { margin: 8px 0 3px; font: 12px/18px "Noto Sans", sans-serif; text-align: center; color: #323232; }
.tools { display: grid; grid-template-columns: 35px 35px; gap: 4px 0; padding-left: 4px; }
.tools button { height: 34px; padding-right: 2px; border: 1px solid transparent; border-radius: 3px; }
.tools .on { background: #d2d2d2; border-color: #b8b8b8; }
.color h2 { margin: 13px 0 5px; }
.chips { position: relative; width: 47px; height: 47px; margin-left: 16px; }
.chip, .mini { position: absolute; border: 1px solid #000; }
.chip { width: 32px; height: 32px; }
.chip.fore { top: 0; left: 0; background: #e6e6e6; }
.chip.back { right: 0; bottom: 0; background: #fff; }
.mini { width: 8px; height: 8px; }
.mini.fore { left: 0; bottom: 5px; background: #000; }
.mini.back { left: 5px; bottom: 0; background: #fff; }
.swap { position: absolute; top: 1px; right: 0; width: 13px; height: 13px; }

.main { display: flex; flex: 1; flex-direction: column; min-width: 0; }
.upper { display: flex; flex: 1; min-height: 0; }
.center { display: flex; flex: 1; flex-direction: column; min-width: 0; }
.canvas { flex: 1; background: #d3d3d3; }
.bin-head { display: flex; flex: none; height: 29px; align-items: center; justify-content: space-between; border-top: 1px solid #e6e6e6; border-bottom: 1px solid #e6e6e6; padding: 0 13px 0 8px; }
.picker { display: flex; align-items: center; justify-content: space-between; }
.picker select { appearance: none; flex: 1; height: 20px; opacity: 1; }
.files { width: 185px; }
.files select { height: 22px; padding-top: 2px; }
.bin-actions { display: flex; gap: 15px; }
.bin-body { flex: none; height: 102px; border-right: 18px solid #f4f4f4; }

.layers { display: flex; flex: none; flex-direction: column; width: 271px; border-left: 1px solid #e6e6e6; }
.layer-tools { display: flex; flex: none; height: 26px; align-items: center; padding: 0 3px 2px 2px; border-bottom: 1px solid #e0e0e0; color: #b9b9b9; }
.layer-tools button { width: 27px; }
.layer-tools .push { margin-left: auto; }
.layer-tools .live { color: #464646; }
.layer-tools .more { margin-left: 5px; width: 28px; }
.blend { display: flex; flex: none; height: 33px; align-items: center; padding: 0 14px 2px 12px; border-bottom: 1px solid #e0e0e0; color: #b9b9b9; }
.normal { flex: none; width: 105px; }
.blend .opacity { flex: none; margin-left: 20px; }
.blend input { flex: none; width: 36px; margin: 2px 0 0 19px; color: #6e6e6e; }
.layer-list { flex: 1; border-right: 10px solid #f4f4f4; }

.bottombar { display: flex; flex: none; height: 56px; padding-left: 4px; border-top: 1px solid #323232; }
.bar-item { flex: none; flex-direction: column; justify-content: flex-start; margin-top: 3px; border-top: 2px solid transparent; white-space: nowrap; }
.bar-item.on { color: #1f6fd6; border-color: #1f6fd6; }
.bar-icon { display: flex; align-items: center; gap: 6px; height: 28px; margin-bottom: 4px; color: #4b4b4b; }
.bar-icon svg:first-child { width: 20px; height: 20px; }
.bar-icon.boxed svg:first-child { width: 22px; height: 22px; }
.bar-icon .chev { margin-right: -18px; }
.bar-icon.dim { color: #b9b9b9; }
.dim .chev { stroke: #b9b9b9; }
.fx { font-size: 18px; line-height: 28px; }
.bar-right .on .bar-icon { color: #1473e6; }
.divider { flex: none; width: 1px; height: 44px; margin-top: 6px; background: #bcbcbc; }
.bar-right { display: flex; margin-left: auto; margin-right: 243px; }

.swatch-window { position: absolute; right: 0; bottom: 0; width: 273px; height: 208px; overflow: hidden; border: 1px solid #c8c8c8; border-top: 0; border-radius: 4px 4px 0 0; background: #fafafa; box-shadow: 0 0 4px rgba(0, 0, 0, .35); }
.sw-title { display: flex; height: 13px; justify-content: flex-end; padding: 2px 4px 0 0; background: linear-gradient(#444, #5a5a5a); }
.sw-tabs { display: flex; height: 26px; justify-content: space-between; background: linear-gradient(90deg, #fafafa 104px, #e8e8e8 104px); }
.sw-tab { width: 104px; padding-bottom: 1px; font: 12px/16px "Liberation Sans", Arial, sans-serif; }
.sw-menu { padding-right: 4px; }
.sw-tools { display: flex; height: 38px; align-items: flex-start; padding: 6px 0 0 11px; }
.default { width: 135px; height: 24px; }
.sw-new { width: 27px; height: 21px; margin-left: 66px; border: 1px solid #000; background: #f0f0f0; }
.sw-trash { height: 21px; margin-left: 6px; color: #b9b9b9; }
.sw-box { display: flex; width: 263px; margin-left: 4px; border: 1px solid #aaa; }
.sw-grid { display: grid; grid-template-columns: repeat(9, 27px); grid-auto-rows: 27px; gap: 1px; background: #dcdcdc; }
.sw-scroll { flex: 1; padding-top: 21px; background: #f4f4f4; }
.sw-scroll i { height: 100%; border-radius: 5px 5px 0 0; background: #bdbdbd; }

.taskbar { display: flex; flex: none; height: 40px; background: linear-gradient(90deg, #1c1c1c 0, #23231c 30%, #1f201d 78%, #3a2e37 86%, #4a302f 90%, #38392f 94%, #36432f 100%); }
.start { width: 48px; }
.search { display: flex; width: 288px; align-items: center; gap: 11px; padding: 0 10px 0 11px; border: 1px solid #b4b4b4; background: #f1f1f1; }
.search input { flex: 1; min-width: 0; padding-top: 2px; font-size: 14px; line-height: 20px; }
.search input::placeholder { color: #333; opacity: 1; }
.taskview { width: 50px; padding-right: 4px; }
.app { position: relative; width: 49px; }
.app.active { background: #4c4d45; }
.app.running::after, .app.active::after { content: ""; position: absolute; right: 4px; bottom: 0; left: 4px; height: 2px; background: #fdf0a5; }
.app.active::after { right: 0; left: 0; }
.tray { display: flex; flex: 1; align-items: center; justify-content: flex-end; gap: 8px; padding-right: 16px; }
.tray > svg:last-of-type { margin-left: 4px; }
.clock { display: flex; flex-direction: column; width: 64px; font-size: 11px; line-height: 18px; text-align: center; color: #fff; }
.notice { margin: 4px 0 0 5px; }
</style>
